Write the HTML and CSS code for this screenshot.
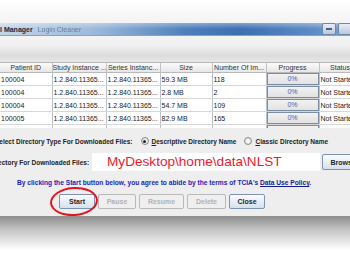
FILE: index.html
```html
<!DOCTYPE html>
<html lang="en">
<head>
    <meta charset="UTF-8">
    <title>Download Manager</title>
    <link rel="stylesheet" href="styles.css">
</head>
<body>
<div class="screen">
    <div class="desk"></div>

    <div class="window">
        <div class="titlebar">
            <span class="title">l Manager</span>
            <span class="title-faint">Login Cleaner</span>
            <span class="winbtns">
                <span class="wbtn"><span class="dash"></span></span>
                <span class="wbtn"></span>
            </span>
        </div>
        <div class="toolbar"></div>

        <!-- download queue -->
        <div class="grid-wrap">
            <table class="grid">
                <colgroup>
                    <col class="c-id"><col class="c-study"><col class="c-series"><col class="c-size">
                    <col class="c-num"><col class="c-prog"><col class="c-status">
                </colgroup>
                <thead>
                    <tr>
                        <th>Patient ID</th><th>Study Instance ...</th><th>Series Instanc...</th><th>Size</th>
                        <th>Number Of Im...</th><th>Progress</th><th>Status</th>
                    </tr>
                </thead>
                <tbody>
                    <tr>
                        <td>100004</td><td>1.2.840.11365...</td><td>1.2.840.11365...</td><td>59.3 MB</td>
                        <td>118</td><td class="prog"><span>0%</span></td><td>Not Started</td>
                    </tr>
                    <tr>
                        <td>100004</td><td>1.2.840.11365...</td><td>1.2.840.11365...</td><td>2.8 MB</td>
                        <td>2</td><td class="prog"><span>0%</span></td><td>Not Started</td>
                    </tr>
                    <tr>
                        <td>100004</td><td>1.2.840.11365...</td><td>1.2.840.11365...</td><td>54.7 MB</td>
                        <td>109</td><td class="prog"><span>0%</span></td><td>Not Started</td>
                    </tr>
                    <tr>
                        <td>100005</td><td>1.2.840.11365...</td><td>1.2.840.11365...</td><td>82.9 MB</td>
                        <td>165</td><td class="prog"><span>0%</span></td><td>Not Started</td>
                    </tr>
                    <tr>
                        <td>100005</td><td>1.2.840.11365...</td><td>1.2.840.11365...</td><td>31.0 MB</td>
                        <td>163</td><td class="prog"><span>0%</span></td><td>Not Started</td>
                    </tr>
                </tbody>
            </table>
        </div>

        <div class="panel">
            <div class="dirtype">
                <span class="label">Select Directory Type For Downloaded Files:</span>
                <label class="radio"><span class="dot on"></span><u>D</u>escriptive Directory Name</label>
                <label class="radio"><span class="dot"></span><u>C</u>lassic Directory Name</label>
            </div>
            <div class="dirpath">
                <span class="label">Directory For Downloaded Files:</span>
                <span class="field">MyDesktop\home\data\NLST</span>
                <span class="btn browse">Browse</span>
            </div>
            <p class="notice">By clicking the Start button below, you agree to abide by the terms of TCIA's <u>Data Use Policy</u>.</p>
            <div class="actions">
                <span class="btn start">Start<span class="circle"></span></span>
                <span class="btn off w-pause">Pause</span>
                <span class="btn off w-resume">Resume</span>
                <span class="btn off w-delete">Delete</span>
                <span class="btn w-close">Close</span>
            </div>
        </div>
    </div>

    <div class="shade"></div>
</div>
</body>
</html>
```

FILE: styles.css
```css
body {
    margin: 0;
    padding: 0;
    background-color: #fff;
    font-family: "Liberation Sans", Arial, sans-serif;
}

.screen {
    width: 350px;
    height: 260px;
    overflow: hidden;
    background-color: #fff;
}

.desk {
    height: 23px;
    background: linear-gradient(#ffffff, #f3f3f3);
}

.window {
    width: 370px;
    background-color: #eeeeee;
}

/* title bar */
.titlebar {
    height: 12px;
    display: flex;
    align-items: center;
    background:
        linear-gradient(rgba(255,255,255,0.35), rgba(255,255,255,0) 50%),
        linear-gradient(90deg, #c3d5e9 0, #9dbadb 25%, #4f80bd 50%, #3b6fb1 65%, #5e8cc6 85%, #8fb0d8 100%);
    border-bottom: 1px solid #8aa2bf;
}

.title {
    font-size: 7px;
    font-weight: bold;
    color: #1b2a3c;
}

.title-faint {
    font-size: 7px;
    color: #6a7f98;
    margin-left: 5px;
    filter: blur(0.7px);
}

.winbtns {
    margin-left: auto;
    margin-right: 18px;
    display: flex;
    gap: 2px;
}

.wbtn {
    width: 12px;
    height: 10px;
    border: 1px solid #6f89a8;
    border-radius: 2px;
    background: linear-gradient(#e9eef5, #b9c8da);
    display: flex;
    align-items: center;
    justify-content: center;
}

.dash {
    width: 6px;
    height: 2px;
    background-color: #46617f;
}

.toolbar {
    height: 26px;
    background: linear-gradient(#f4f4f4 0, #f1f1f1 35%, #dcdcdc 75%, #e7e7e7 100%);
}

/* table */
.grid-wrap {
    height: 65px;
    overflow: hidden;
    background-color: #fff;
    border-top: 1px solid #b7b7b7;
}

.grid {
    border-collapse: collapse;
    table-layout: fixed;
    width: 361px;
    font-size: 7px;
    color: #222;
}

.c-id { width: 52px; }
.c-study { width: 54px; }
.c-series { width: 54px; }
.c-size { width: 52px; }
.c-num { width: 54px; }
.c-prog { width: 53px; }
.c-status { width: 42px; }

.grid th {
    height: 9px;
    padding: 0;
    font-weight: normal;
    color: #333;
    background: linear-gradient(#fbfbfb, #e6e6e6);
    border-right: 1px solid #c3c3c3;
    border-bottom: 1px solid #b9b9b9;
    white-space: nowrap;
    overflow: hidden;
}

.grid td {
    height: 12px;
    padding: 0 0 0 1px;
    border-right: 1px solid #b9c1cc;
    border-bottom: 1px solid #d6d6d6;
    white-space: nowrap;
    overflow: hidden;
}

.grid td.prog {
    padding: 0;
    text-align: center;
}

.prog span {
    display: block;
    height: 10px;
    line-height: 10px;
    border: 1px solid #7b8da3;
    background: linear-gradient(#f2f2f2, #e2e2e2);
    color: #3e5fae;
}

/* bottom panel */
.panel {
    padding: 6px 0 7px 0;
    font-size: 6.5px;
    font-weight: bold;
    color: #222;
}

.label {
    flex: none;
    white-space: nowrap;
}

.dirtype {
    height: 14px;
    display: flex;
    align-items: center;
    margin-left: -5px;
}

.dirtype .label {
    margin-right: 8px;
}

.radio {
    display: flex;
    align-items: center;
    white-space: nowrap;
    margin-right: 8px;
}

.dot {
    width: 6px;
    height: 6px;
    border: 1px solid #8a8a8a;
    border-radius: 50%;
    background: radial-gradient(#ffffff, #d6d6d6);
    margin-right: 3px;
    display: flex;
    align-items: center;
    justify-content: center;
}

.dot.on::after {
    content: "";
    width: 3px;
    height: 3px;
    border-radius: 50%;
    background-color: #222;
}

.dirpath {
    margin-top: 5px;
    height: 18px;
    display: flex;
    align-items: center;
    margin-left: -11px;
}

.dirpath .label {
    margin-right: 3px;
}

.field {
    flex: none;
    width: 213px;
    height: 18px;
    line-height: 18px;
    padding-left: 15px;
    background-color: #fff;
    color: #f0182a;
    font-size: 13.6px;
    font-weight: normal;
    margin-right: 2px;
}

.btn {
    flex: none;
    display: inline-flex;
    align-items: center;
    justify-content: center;
    height: 13px;
    border: 1px solid #7f93ad;
    border-radius: 2px;
    background: linear-gradient(#fbfcfe, #d5e0ee);
    font-size: 7px;
    font-weight: bold;
    color: #1f1f1f;
}

.browse {
    width: 40px;
    height: 14px;
}

.notice {
    margin: 6px 0 0 17px;
    height: 12px;
    line-height: 12px;
    font-size: 6.65px;
    color: #2323b8;
    white-space: nowrap;
}

.notice u {
    color: #1a1a8c;
}

.actions {
    margin-top: 5px;
    height: 15px;
    display: flex;
    padding-left: 59px;
}

.actions .btn {
    margin-right: 3px;
}

.start { width: 34px; position: relative; }
.w-pause { width: 36px; }
.w-resume { width: 43px; }
.w-delete { width: 37px; }
.w-close { width: 34px; }

.btn.off {
    border-color: #b9b9b9;
    background: #efefef;
    color: #b2b2b2;
}

/* red marker round the Start button */
.circle {
    position: absolute;
    left: -10px;
    top: -8px;
    width: 44px;
    height: 25px;
    border: 2px solid #e3141e;
    border-radius: 50%;
    transform: rotate(-4deg);
}

.shade {
    height: 34px;
    background: linear-gradient(#8d8d8d, #c4c4c4 40%, #ffffff 100%);
}
```
